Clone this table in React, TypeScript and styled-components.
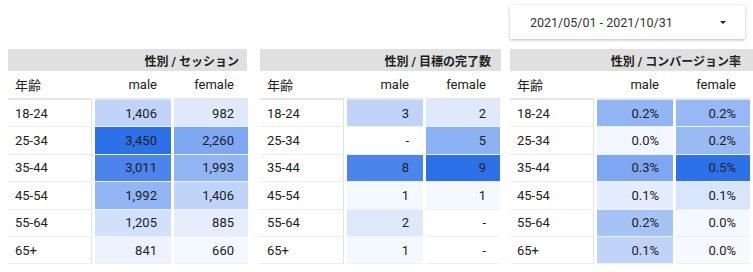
import styled, { createGlobalStyle } from 'styled-components';

const GlobalStyle = createGlobalStyle`
  html, body {
    margin: 0;
    padding: 0;
    background: #ffffff;
  }
  body {
    font-family: Roboto, "Noto Sans CJK JP", sans-serif;
    color: #212121;
  }
`;

const Page = styled.div`
  width: 753px;
  height: 272px;
  overflow: hidden;
  padding-top: 5px;
  box-sizing: border-box;
`;

const TopBar = styled.div`
  display: flex;
  justify-content: flex-end;
  padding-right: 8px;
  margin-bottom: 10px;
`;

const DatePicker = styled.div`
  width: 235px;
  height: 34px;
  box-sizing: border-box;
  display: flex;
  align-items: center;
  justify-content: space-between;
  padding: 0 19px 0 20px;
  background: #fff;
  box-shadow: 0 1px 3px rgba(0, 0, 0, 0.28);
  font-size: 12.5px;
  color: #333;
`;

const Caret = styled.span`
  width: 0;
  height: 0;
  border-left: 3.5px solid transparent;
  border-right: 3.5px solid transparent;
  border-top: 3.5px solid #222;
`;

const Tables = styled.div`
  display: flex;
  align-items: flex-start;
`;

const Panel = styled.div<{ $left: number; $width: number }>`
  margin-left: ${(p) => p.$left}px;
  width: ${(p) => p.$width}px;
  flex-shrink: 0;
`;

const Title = styled.div<{ $pad: number }>`
  height: 22px;
  background: #e0e0e0;
  display: flex;
  align-items: center;
  justify-content: flex-end;
  padding-right: ${(p) => p.$pad}px;
  font-size: 12px;
  font-weight: 700;
  color: #212121;
`;

const Grid = styled.div`
  display: grid;
  grid-template-columns: 84px 76px 74px;
  column-gap: 3px;
`;

const HeadCell = styled.div<{ $align: 'left' | 'right' }>`
  height: 27px;
  display: flex;
  align-items: center;
  justify-content: ${(p) => (p.$align === 'left' ? 'flex-start' : 'flex-end')};
  padding: ${(p) => (p.$align === 'left' ? '0 0 0 7px' : '0 14px 0 0')};
  border-bottom: 2px solid #e6e6e6;
  font-size: 13px;
  color: #212121;
`;

const LabelCell = styled.div`
  height: 27.4px;
  box-sizing: border-box;
  display: flex;
  align-items: center;
  padding-left: 7px;
  border-right: 1px solid #e3e3e3;
  border-bottom: 1px solid #ededed;
  font-size: 13px;
`;

const ValueCell = styled.div`
  height: 27.4px;
  box-sizing: border-box;
  display: flex;
  align-items: center;
  justify-content: flex-end;
  padding-right: 14px;
  border-bottom: 1px solid #f0f0f0;
  font-size: 13px;
  color: #202124;
`;

type Cell = { v: string; t: number | null };
type Row = { age: string; male: Cell; female: Cell };
type Table = { title: string; left: number; width: number; rows: Row[] };

const light = [246, 249, 255];
const dark = [45, 113, 232];

// heat-map colour: t = 0 is the palest blue, 1 the darkest, null is blank
function heat(t: number | null): string {
  if (t === null) return '#ffffff';
  const c = light.map((l, i) => Math.round(l + (dark[i] - l) * t));
  return `rgb(${c[0]}, ${c[1]}, ${c[2]})`;
}

const c = (v: string, t: number | null): Cell => ({ v, t });

const tables: Table[] = [
  {
    title: '性別 / セッション',
    left: 8,
    width: 239,
    rows: [
      { age: '18-24', male: c('1,406', 0.27), female: c('982', 0.115) },
      { age: '25-34', male: c('3,450', 1), female: c('2,260', 0.6) },
      { age: '35-44', male: c('3,011', 0.85), female: c('1,993', 0.5) },
      { age: '45-54', male: c('1,992', 0.5), female: c('1,406', 0.27) },
      { age: '55-64', male: c('1,205', 0.18), female: c('885', 0.08) },
      { age: '65+', male: c('841', 0.05), female: c('660', 0.01) },
    ],
  },
  {
    title: '性別 / 目標の完了数',
    left: 13,
    width: 241,
    rows: [
      { age: '18-24', male: c('3', 0.27), female: c('2', 0.12) },
      { age: '25-34', male: c('-', null), female: c('5', 0.52) },
      { age: '35-44', male: c('8', 0.85), female: c('9', 1) },
      { age: '45-54', male: c('1', 0.01), female: c('1', 0.01) },
      { age: '55-64', male: c('2', 0.12), female: c('-', null) },
      { age: '65+', male: c('1', 0.01), female: c('-', null) },
    ],
  },
  {
    title: '性別 / コンバージョン率',
    left: 9,
    width: 243,
    rows: [
      { age: '18-24', male: c('0.2%', 0.5), female: c('0.2%', 0.48) },
      { age: '25-34', male: c('0.0%', 0.02), female: c('0.2%', 0.46) },
      { age: '35-44', male: c('0.3%', 0.6), female: c('0.5%', 1) },
      { age: '45-54', male: c('0.1%', 0.09), female: c('0.1%', 0.15) },
      { age: '55-64', male: c('0.2%', 0.4), female: c('0.0%', 0.01) },
      { age: '65+', male: c('0.1%', 0.27), female: c('0.0%', 0) },
    ],
  },
];

function HeatTable({ table }: { table: Table }) {
  return (
    <Panel $left={table.left} $width={table.width}>
      <Title $pad={table.width - 231}>{table.title}</Title>
      <Grid>
        <HeadCell $align="left">年齢</HeadCell>
        <HeadCell $align="right">male</HeadCell>
        <HeadCell $align="right">female</HeadCell>
        {table.rows.map((row) => [
          <LabelCell key={row.age + '-l'}>{row.age}</LabelCell>,
          <ValueCell key={row.age + '-m'} style={{ background: heat(row.male.t) }}>
            {row.male.v}
          </ValueCell>,
          <ValueCell key={row.age + '-f'} style={{ background: heat(row.female.t) }}>
            {row.female.v}
          </ValueCell>,
        ])}
      </Grid>
    </Panel>
  );
}

export default function App() {
  return (
    <Page>
      <GlobalStyle />
      <TopBar>
        <DatePicker>
          <span>2021/05/01 - 2021/10/31</span>
          <Caret />
        </DatePicker>
      </TopBar>
      <Tables>
        {tables.map((t) => (
          <HeatTable key={t.title} table={t} />
        ))}
      </Tables>
    </Page>
  );
}
